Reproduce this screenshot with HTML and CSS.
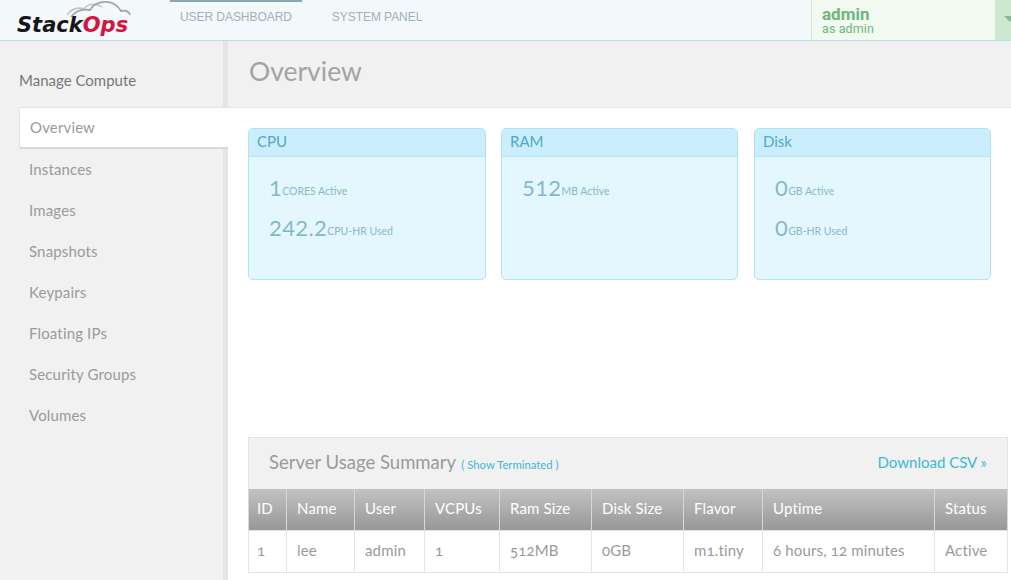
FILE: index.html
```html
<!DOCTYPE html>
<html lang="en">
<head>
  <meta charset="UTF-8">
  <title>Overview - StackOps</title>
  <link rel="stylesheet" href="styles.css">
</head>
<body>
  <header class="topbar">
    <a class="logo" href="#">
      <svg class="logo-cloud" width="70" height="18" viewBox="0 0 70 18" fill="none">
        <path d="M3 15 C8 8 14 7 20 9 C24 3 33 3 38 7" stroke="#c4c4c4" stroke-width="1.6"/>
        <path d="M7 17 C12 10 20 9 26 10 C31 1 49 -3 57 11 C62 10 65 12 66 15" stroke="#a4a4a4" stroke-width="1.8"/>
      </svg>
      <span class="logo-text">Stack<em>Ops</em></span>
    </a>
    <nav class="topnav">
      <a class="topnav-item active" href="#">USER DASHBOARD</a>
      <a class="topnav-item" href="#">SYSTEM PANEL</a>
    </nav>
    <div class="user-box">
      <div class="user-info">
        <strong>admin</strong>
        <span>as admin</span>
      </div>
      <div class="user-toggle"><i class="caret"></i></div>
    </div>
  </header>

  <div class="layout">
    <aside class="sidebar">
      <h4>Manage Compute</h4>
      <ul class="sidenav">
        <li class="active"><a href="#">Overview</a></li>
        <li><a href="#">Instances</a></li>
        <li><a href="#">Images</a></li>
        <li><a href="#">Snapshots</a></li>
        <li><a href="#">Keypairs</a></li>
        <li><a href="#">Floating IPs</a></li>
        <li><a href="#">Security Groups</a></li>
        <li><a href="#">Volumes</a></li>
      </ul>
    </aside>

    <main class="content">
      <div class="page-title"><h1>Overview</h1></div>
      <div class="page-body">
        <section class="cards">
          <div class="card">
            <h3>CPU</h3>
            <div class="card-body">
              <p><b>1</b>CORES Active</p>
              <p><b>242.2</b>CPU-HR Used</p>
            </div>
          </div>
          <div class="card">
            <h3>RAM</h3>
            <div class="card-body">
              <p><b>512</b>MB Active</p>
            </div>
          </div>
          <div class="card">
            <h3>Disk</h3>
            <div class="card-body">
              <p><b>0</b>GB Active</p>
              <p><b>0</b>GB-HR Used</p>
            </div>
          </div>
        </section>

        <section class="usage">
          <div class="usage-head">
            <h2>Server Usage Summary <small>( <a href="#">Show Terminated</a> )</small></h2>
            <a class="csv" href="#">Download CSV »</a>
          </div>
          <table class="usage-table">
            <thead>
              <tr><th>ID</th><th>Name</th><th>User</th><th>VCPUs</th><th>Ram Size</th><th>Disk Size</th><th>Flavor</th><th>Uptime</th><th>Status</th></tr>
            </thead>
            <tbody>
              <tr><td>1</td><td>lee</td><td>admin</td><td>1</td><td>512MB</td><td>0GB</td><td>m1.tiny</td><td>6 hours, 12 minutes</td><td>Active</td></tr>
            </tbody>
          </table>
        </section>
      </div>
    </main>
  </div>
</body>
</html>
```

FILE: styles.css
```css
html, body {height:100%;}
body {
  margin:0; overflow:hidden;
  font-family:"Lato","Noto Sans",sans-serif;
  color:#9a9a9a; background:#fff;
}
a {text-decoration:none; color:inherit;}
h1, h2, h3, h4, p, ul {margin:0; padding:0;}

/* top bar */
.topbar {
  display:flex; height:40px;
  background:#f3f8fb;
  border-bottom:1px solid #bcdcea;
}
.logo {position:relative; display:block; width:170px; flex:none;}
.logo-cloud {position:absolute; left:64px; top:0;}
.logo-text {
  position:absolute; left:17px; top:13px;
  font:italic bold 21px/24px "DejaVu Sans",sans-serif;
  color:#15151a;
}
.logo-text em {color:#d2163f;}
.topnav {display:flex; flex:1;}
.topnav-item {
  padding:0 10px; margin-right:20px;
  border-top:2px solid transparent;
  font:12px/31px "Liberation Sans",sans-serif;
  letter-spacing:-.06px;
  color:#9fb0ba;
}
.topnav-item.active {border-top-color:#8aa7b4;}
.user-box {display:flex; width:199px; flex:none; border-left:1px solid #d3e5d6; background:#f1f9f1;}
.user-info {
  flex:1; padding:6px 0 0 10px;
  font-family:"Roboto",sans-serif; color:#6db77c;
}
.user-info strong {display:block; font-size:17px; line-height:17px;}
.user-info span {display:block; font-size:12.5px; line-height:12px; letter-spacing:.1px;}
.user-toggle {width:16px; background:#cce8d0; position:relative;}
.caret {
  position:absolute; left:9px; top:16px;
  border:6px solid transparent; border-top-color:#8ab796;
  border-bottom:0;
}

.layout {display:flex; height:539px;}

/* sidebar */
.sidebar {
  width:223px; flex:none;
  background:#f1f1f1;
  border-right:5px solid #e5e5e5;
  padding-top:29px;
}
.sidebar h4 {
  margin:0 0 17px 19px;
  font-size:15px; line-height:20px; font-weight:400; color:#77777a;
}
.sidenav {list-style:none; margin-right:-5px;}
.sidenav li {height:41px; line-height:40px; padding-left:29px; font-size:15px; letter-spacing:.15px;}
.sidenav .active {
  margin-left:19px; padding-left:10px; height:42px; line-height:39px;
  background:#fff;
  border:1px solid #e4e4e4; border-right:0; border-bottom:2px solid #d8d8d8;
  box-sizing:border-box;
}

/* main */
.content {flex:1; min-width:0;}
.page-title {
  height:66px;
  background:#f1f1f1;
  border-bottom:1px solid #e5e5e5;
  padding-left:21px;
}
.page-title h1 {font-size:26.5px; line-height:61px; font-weight:400; color:#a3a3a3;}
.page-body {padding:20px 0 0 20px;}

.cards {display:grid; grid-template-columns:238px 237px 238px; column-gap:15px; width:745px;}
.card:last-child {margin-left:1px;}
.card {
  height:152px; box-sizing:border-box;
  background:#e5f7fe;
  border:1px solid #aee2f6; border-radius:5px;
}
.card h3 {
  height:28px;
  padding-left:8px;
  background:#cbeefd;
  border-bottom:1px solid #b5e4f7;
  border-radius:4px 4px 0 0;
  font-size:15px; line-height:25px; font-weight:400; color:#4fa8c9;
  box-sizing:border-box;
}
.card-body {padding:14px 20px 0;}
.card-body p {
  height:40px; line-height:32px;
  font-size:10.5px; color:#86b7ca;
  white-space:nowrap;
}
.card-body b {
  font-size:22px; font-weight:400; color:#86b7ca; letter-spacing:.4px;
  position:relative; top:1px;
}

.usage {margin-top:157px; width:760px;}
.usage-head {
  display:flex; justify-content:space-between; align-items:center;
  height:52px; box-sizing:border-box;
  padding:0 20px 4px;
  background:#f1f1f1;
  border:1px solid #e4e4e4; border-bottom:0;
}
.usage-head h2 {font-size:18.5px; font-weight:400; color:#9a9a9a;}
.usage-head small {font-size:11.3px; color:#3db7d6; margin-left:1px;}
.csv {font-size:15px; color:#3db7d6;}

.usage-table {
  width:760px; table-layout:fixed;
  border-collapse:collapse;
  font-size:15px; letter-spacing:.15px;
  font-variant-numeric:oldstyle-nums;
}
.usage-table th, .usage-table td {padding:0 0 3px 10px; text-align:left; white-space:nowrap;}
.usage-table th:first-child, .usage-table td:first-child {padding-left:8px;}
.usage-table th {
  height:38px;
  font-weight:400; color:#fff;
  background:linear-gradient(#c2c2c2,#979797);
  border-left:1px solid #d8d8d8; border-right:1px solid #d8d8d8;
}
.usage-table th:first-child {width:29px;}
.usage-table th:nth-child(2) {width:57px;}
.usage-table th:nth-child(3) {width:59px;}
.usage-table th:nth-child(4) {width:64px;}
.usage-table th:nth-child(5) {width:81px;}
.usage-table th:nth-child(6) {width:81px;}
.usage-table th:nth-child(7) {width:68px;}
.usage-table th:nth-child(8) {width:161px;}
.usage-table td {
  height:38px;
  color:#9a9a9a;
  border:1px solid #e4e4e4;
}
```
